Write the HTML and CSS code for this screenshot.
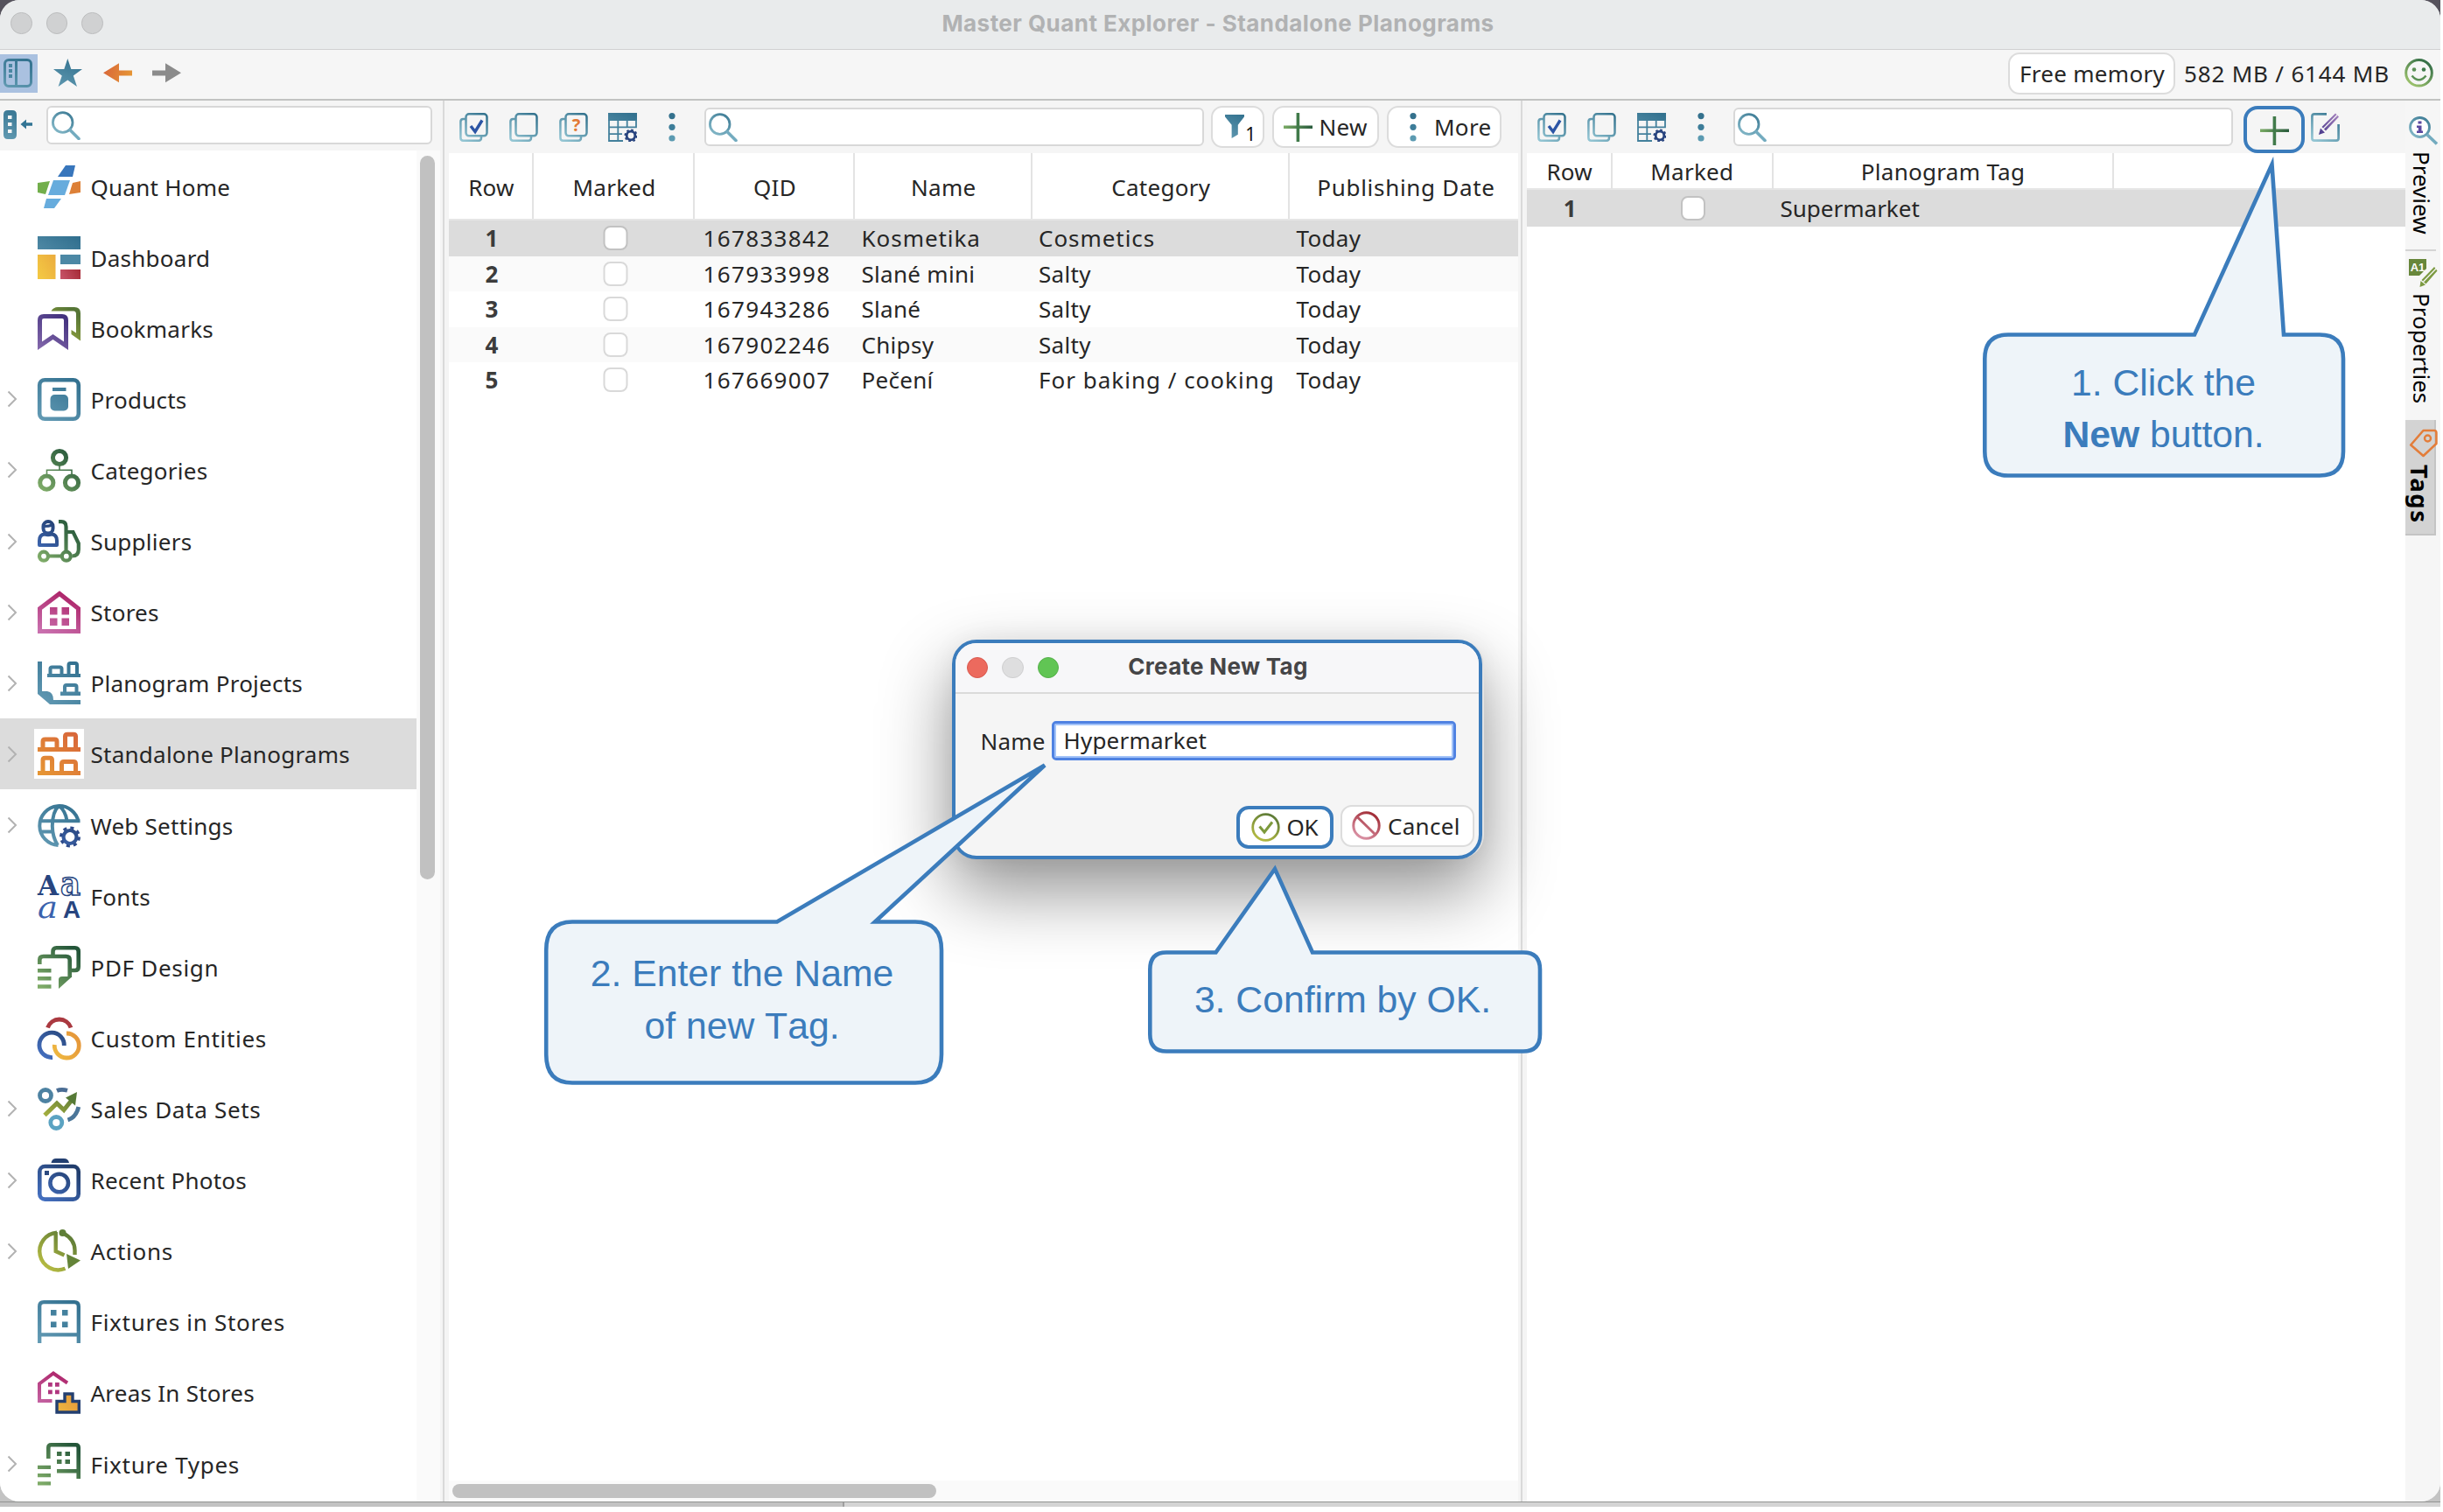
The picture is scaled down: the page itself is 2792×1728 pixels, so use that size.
FILE: index.html
```html
<!DOCTYPE html>
<html lang="en">
<head>
<meta charset="utf-8">
<title>Master Quant Explorer - Standalone Planograms</title>
<link rel="stylesheet" href="styles.css">
</head>
<body>
<svg class="defs" width="0" height="0" aria-hidden="true">
  <defs>
    <linearGradient id="teal" gradientUnits="userSpaceOnUse" x1="42" y1="0" x2="8" y2="49"><stop offset="0" stop-color="#32708f"/><stop offset="1" stop-color="#6199b3"/></linearGradient>
    <linearGradient id="green" gradientUnits="userSpaceOnUse" x1="42" y1="4" x2="3" y2="46"><stop offset="0" stop-color="#235539"/><stop offset="1" stop-color="#7fac68"/></linearGradient>
    <linearGradient id="blue" gradientUnits="userSpaceOnUse" x1="34" y1="6" x2="4" y2="49"><stop offset="0" stop-color="#213d6c"/><stop offset="1" stop-color="#4672c4"/></linearGradient>
    <linearGradient id="orange" gradientUnits="userSpaceOnUse" x1="42" y1="0" x2="4" y2="49"><stop offset="0" stop-color="#d8663a"/><stop offset="1" stop-color="#e69634"/></linearGradient>
    <linearGradient id="pink" gradientUnits="userSpaceOnUse" x1="30" y1="4" x2="10" y2="49"><stop offset="0" stop-color="#ae266b"/><stop offset="1" stop-color="#c970ae"/></linearGradient>
    <linearGradient id="olive" gradientUnits="userSpaceOnUse" x1="40" y1="4" x2="6" y2="46"><stop offset="0" stop-color="#567636"/><stop offset="1" stop-color="#bcc042"/></linearGradient>
    <linearGradient id="purple" gradientUnits="userSpaceOnUse" x1="30" y1="8" x2="2" y2="49"><stop offset="0" stop-color="#40307c"/><stop offset="1" stop-color="#8468ac"/></linearGradient>
    <linearGradient id="yellow" gradientUnits="userSpaceOnUse" x1="46" y1="22" x2="4" y2="48"><stop offset="0" stop-color="#e5963a"/><stop offset="1" stop-color="#f3c743"/></linearGradient>
    <linearGradient id="red" gradientUnits="userSpaceOnUse" x1="49" y1="38" x2="26" y2="49"><stop offset="0" stop-color="#a52a36"/><stop offset="1" stop-color="#c8556a"/></linearGradient>
    <linearGradient id="t" gradientUnits="userSpaceOnUse" x1="24" y1="0" x2="10" y2="33"><stop offset="0" stop-color="#33728f"/><stop offset="1" stop-color="#5e97af"/></linearGradient>
    <linearGradient id="tl" gradientUnits="userSpaceOnUse" x1="28" y1="2" x2="6" y2="33"><stop offset="0" stop-color="#35748f"/><stop offset="1" stop-color="#93c5d3"/></linearGradient>
    <linearGradient id="g" gradientUnits="userSpaceOnUse" x1="33" y1="10" x2="0" y2="22"><stop offset="0" stop-color="#235539"/><stop offset="1" stop-color="#7fb068"/></linearGradient>
    <linearGradient id="gl" gradientUnits="userSpaceOnUse" x1="26" y1="2" x2="6" y2="31"><stop offset="0" stop-color="#2f6a45"/><stop offset="1" stop-color="#a2c76e"/></linearGradient>
    <linearGradient id="o" gradientUnits="userSpaceOnUse" x1="0" y1="10" x2="33" y2="20"><stop offset="0" stop-color="#d8663a"/><stop offset="1" stop-color="#e69634"/></linearGradient>
    <linearGradient id="ol" gradientUnits="userSpaceOnUse" x1="24" y1="0" x2="8" y2="33"><stop offset="0" stop-color="#567636"/><stop offset="1" stop-color="#bcc042"/></linearGradient>
    <linearGradient id="r" gradientUnits="userSpaceOnUse" x1="24" y1="4" x2="8" y2="33"><stop offset="0" stop-color="#a3303a"/><stop offset="1" stop-color="#df9aae"/></linearGradient>
    <linearGradient id="p" gradientUnits="userSpaceOnUse" x1="8" y1="22" x2="32" y2="2"><stop offset="0" stop-color="#4a3a8c"/><stop offset="1" stop-color="#a884bf"/></linearGradient>

    <symbol id="i-search" viewBox="0 0 33 33"><circle cx="12.7" cy="13" r="11.3" fill="none" stroke="url(#tl)" stroke-width="2.8"/><path d="M21 21.5L31 31.5" stroke="#73abbf" stroke-width="3.6" stroke-linecap="round"/></symbol>
    <symbol id="i-copies" viewBox="0 0 33 33"><g fill="none" stroke="url(#tl)" stroke-width="2.5"><rect x="7.5" y="1.3" width="24" height="25" rx="3.5"/><path d="M7.5 7H4.5Q1.4 7 1.4 10V28.5Q1.4 31.7 4.5 31.7H22Q25 31.7 25 28.5V26.5"/></g></symbol>
    <symbol id="i-grid" viewBox="0 0 33 33"><path d="M0 0H33V9H0Z" fill="url(#t)"/><path d="M1 8V32H17M1 16.3H32V8M1 24.2H16M11.3 8V32M21.7 8V16" fill="none" stroke="#43809c" stroke-width="1.8"/><circle cx="26" cy="26" r="4.8" fill="none" stroke="#27437e" stroke-width="2.8"/><circle cx="26" cy="26" r="6.6" fill="none" stroke="#27437e" stroke-width="2" stroke-dasharray="2.6 2.58"/></symbol>
    <symbol id="i-dots" viewBox="0 0 8 33"><circle cx="4" cy="3.6" r="3.6" fill="#34718d"/><circle cx="4" cy="16.3" r="3.6" fill="#3d7d99"/><circle cx="4" cy="29" r="3.6" fill="#5b9ab1"/></symbol>
    <symbol id="i-plus" viewBox="0 0 33 33"><path d="M0 14.6H33V18H0Z" fill="url(#g)"/><path d="M14.6 0H18.2V33H14.6Z" fill="#417a4a"/></symbol>
    <symbol id="i-chev" viewBox="0 0 12 20"><path d="M1.5 1.5L10 10L1.5 18.5" fill="none" stroke="#b2b2b2" stroke-width="2"/></symbol>
  </defs>
</svg>

<div class="desktop">
<div class="window">
  <header class="titlebar">
    <div class="lights"><i></i><i></i><i></i></div>
    <h1>Master Quant Explorer - Standalone Planograms</h1>
  </header>

  <div class="toolbar">
    <button class="toggle" aria-label="Toggle sidebar"><svg viewBox="0 0 33 33"><g fill="none" stroke="url(#t)" stroke-width="3"><rect x="1.5" y="1.5" width="30" height="30" rx="4.5"/><path d="M14.5 2V31"/></g><path d="M6 6H10V10H6ZM6 12H10V16H6ZM6 18H10V22H6Z" fill="#4a87a2"/></svg></button>
    <svg class="ic star" viewBox="0 0 33 33"><path d="M16.3 0L20.3 12H33L22.8 19.6L27 32L16.3 24.4L5.6 32L9.8 19.6L0 12H12.3Z" fill="url(#t)"/></svg>
    <svg class="ic back" viewBox="0 0 33 33"><path d="M0 16.3L18 5.3V13.6H33V19.6H18V27.3Z" fill="url(#o)"/></svg>
    <svg class="ic fwd" viewBox="0 0 33 33"><path d="M33 16.3L15 5.3V13.6H0V19.6H15V27.3Z" fill="#8b8b8b"/></svg>
    <button class="btn memory">Free memory</button>
    <span class="usage">582 MB / 6144 MB</span>
    <svg class="ic smile" viewBox="0 0 33 33"><circle cx="16.5" cy="16.3" r="14.8" fill="none" stroke="url(#gl)" stroke-width="3"/><circle cx="11" cy="12.5" r="2.3" fill="#5a9055"/><circle cx="22" cy="12.5" r="2.3" fill="#3f7a4b"/><path d="M8.5 19.5Q16.5 29 24.5 19.5" fill="none" stroke="#5a9055" stroke-width="2.6"/></svg>
  </div>

  <main>
    <aside class="sidebar">
      <div class="side-tools">
        <svg class="ic collapse" viewBox="0 0 33 33"><path d="M5 0H10Q15 0 15 5V28Q15 33 10 33H5Q0 33 0 28V5Q0 0 5 0ZM5 6V10H9.500V6ZM5 14V18H9.500V14ZM5 22V26H9.500V22Z" fill="url(#t)" fill-rule="evenodd"/><path d="M19.500 16L26 10.500V14.200H33V17.800H26V21.500Z" fill="#327494"/></svg>
        <div class="search"><svg class="ic"><use href="#i-search"/></svg></div>
      </div>
      <div class="side-body">
        <nav>
          <div class="item"><span class="chev"></span><svg class="icon" viewBox="0 0 49 49"><path d="M23 13L32 0H43L40 13Z" fill="#3876bc"/><path d="M0 20L14 18L9 33L0 31Z" fill="#72ae4b"/><path d="M18 17H37L31 34H12Z" fill="#67acdd"/><path d="M40 20L49 18V31L36 33Z" fill="#dd8037"/><path d="M10 38H27L19 49H7Z" fill="#67acdd"/></svg><span>Quant Home</span></div>
          <div class="item"><span class="chev"></span><svg class="icon" viewBox="0 0 49 49"><path d="M0 0H49V15H0Z" fill="url(#teal)"/><path d="M0 21H20.500V49H0Z" fill="url(#yellow)"/><path d="M26 21H49V32H26Z" fill="#4c88a5"/><path d="M26 38H49V49H26Z" fill="url(#red)"/></svg><span>Dashboard</span></div>
          <div class="item"><span class="chev"></span><svg class="icon" viewBox="0 0 49 49"><path fill="url(#purple)" fill-rule="evenodd" d="M0 49V15Q0 8 7 8H28Q35 8 35 15V49L17.500 37ZM5 39.500V15Q5 13 7 13H28Q30 13 30 15V39.500L17.500 31Z"/><path d="M15.500 4.500Q18 0 23 0H42Q49 0 49 7V38.500L38.500 31V26L44 29.500V8Q44 4.500 41 4.500Z" fill="url(#olive)"/></svg><span>Bookmarks</span></div>
          <div class="item"><svg class="chev"><use href="#i-chev"/></svg><svg class="icon" viewBox="0 0 49 49"><rect x="2.200" y="2.200" width="44.600" height="44.600" rx="6" fill="none" stroke="url(#teal)" stroke-width="4.600"/><path d="M17 11H32.500V15H17Z" fill="url(#teal)"/><rect x="14.500" y="19" width="20.500" height="18.500" rx="5" fill="url(#teal)"/></svg><span>Products</span></div>
          <div class="item"><svg class="chev"><use href="#i-chev"/></svg><svg class="icon" viewBox="0 0 49 49"><g fill="none" stroke="url(#green)" stroke-width="5"><circle cx="25" cy="10" r="7.600"/><circle cx="10.300" cy="38.700" r="7.600"/><circle cx="39" cy="38.700" r="7.600"/><path d="M25 18V24M10.500 30V24.300H39V30" stroke-width="1.600"/></g></svg><span>Categories</span></div>
          <div class="item"><svg class="chev"><use href="#i-chev"/></svg><svg class="icon" viewBox="0 0 49 49"><g fill="none" stroke="url(#blue)" stroke-width="4"><rect x="6.500" y="2" width="11" height="13.500" rx="5.500"/><path d="M7 7.500Q13 7.500 17 6" stroke-width="3"/><path d="M2 29V24Q2 17 8 16.500Q12 18 16 16.500Q22 17 22 24V29H2Z" stroke-linejoin="round"/></g><g fill="none" stroke="url(#green)" stroke-width="4.200"><path d="M24 2.200H27Q32.500 2.200 32.500 8V36M34 14H40.500L46.800 27V34Q46.800 41.500 39.500 41.500M12 41.500H28"/><circle cx="7" cy="41.700" r="5"/><circle cx="32.800" cy="41.700" r="5"/></g></svg><span>Suppliers</span></div>
          <div class="item"><svg class="chev"><use href="#i-chev"/></svg><svg class="icon" viewBox="0 0 49 49"><path d="M2.500 20.500L25 3.500L46.500 20.500V46.500H2.500Z" fill="none" stroke="url(#pink)" stroke-width="5"/><path d="M14 19H22.500V27.500H14ZM27.500 19H36V27.500H27.500ZM14 31.500H22.500V40H14ZM27.500 31.500H36V40H27.500Z" fill="url(#pink)"/></svg><span>Stores</span></div>
          <div class="item"><svg class="chev"><use href="#i-chev"/></svg><svg class="icon" viewBox="0 0 49 49"><g fill="url(#teal)"><path d="M0 0H5V34H11Q18 35 18 44H49V49H14L0 37Z"/><path d="M11 14H49V18H11ZM26 34.500H49V39H26Z"/></g><g fill="none" stroke="url(#teal)" stroke-width="4"><path d="M14.500 15V8.500Q14.500 6.500 16.500 6.500H25.500Q27.500 6.500 27.500 8.500V15M35.500 15V4Q35.500 2 37.500 2H43Q45 2 45 4V15M31 35V29Q31 27 33 27H42.500Q44.500 27 44.500 29V35"/></g></svg><span>Planogram Projects</span></div>
          <div class="item active"><svg class="chev"><use href="#i-chev"/></svg><svg class="icon" viewBox="0 0 49 49"><path d="M0 17H49V22H0ZM0 44H49V49H0Z" fill="url(#orange)"/><g fill="none" stroke="url(#orange)" stroke-width="5"><path d="M6 18V10.500Q6 8 8.500 8H19.500Q22 8 22 10.500V18M31.500 18V4.500Q31.500 2.300 34 2.300H41Q43.500 2.300 43.500 4.500V18M6 45V31.500Q6 29.300 8.500 29.300H14Q16.500 29.300 16.500 31.500V45M27.500 45V36Q27.500 33.500 30 33.500H41Q43.500 33.500 43.500 36V45"/></g></svg><span>Standalone Planograms</span></div>
          <div class="item"><svg class="chev"><use href="#i-chev"/></svg><svg class="icon" viewBox="0 0 49 49"><g fill="none" stroke="url(#teal)" stroke-width="4"><path d="M46.800 21A22.400 22.400 0 1 0 23.500 46.900M3 19.300H48.500M3 31.500H16M24.500 2Q17 8 16.800 25Q17 38 23 47M24.500 2Q32 8 33.500 19"/></g><circle cx="37" cy="37.500" r="7.500" fill="none" stroke="url(#blue)" stroke-width="4.200"/><circle cx="37" cy="37.500" r="10.500" fill="none" stroke="#2c4a8a" stroke-width="3" stroke-dasharray="4.100 4.150"/></svg><span>Web Settings</span></div>
          <div class="item"><span class="chev"></span><svg class="icon glyphs" viewBox="0 0 49 49"><text x="0" y="22.500" class="g-slab" textLength="24" lengthAdjust="spacingAndGlyphs">A</text><text x="26" y="22.500" class="g-open" textLength="23" lengthAdjust="spacingAndGlyphs">a</text><text x="0" y="49" class="g-ital" textLength="23" lengthAdjust="spacingAndGlyphs">a</text><text x="29" y="49" class="g-bold" textLength="20" lengthAdjust="spacingAndGlyphs">A</text></svg><span>Fonts</span></div>
          <div class="item"><span class="chev"></span><svg class="icon" viewBox="0 0 49 49"><g fill="none" stroke="url(#green)" stroke-width="4.600"><path d="M17.500 10V6.500Q17.500 2.300 21.500 2.300H42.700Q46.700 2.300 46.700 6.500V24Q46.700 28 42.700 28H39M2.300 21V16Q2.300 12 6.500 12H32.500Q36.700 12 36.700 16V36"/></g><path d="M24 49V38.500Q24 35 28 35H39.500ZM0 26H15.500V30.500H0ZM0 35H15.500V39.500H0ZM0 44.300H15.500V48.800H0Z" fill="url(#green)"/></svg><span class="mid">PDF Design</span></div>
          <div class="item"><span class="chev"></span><svg class="icon" viewBox="0 0 49 49"><g fill="none" stroke-width="4.800"><path d="M11.500 12.500A14 14 0 0 1 38 12.500" stroke="#aa3940"/><path d="M17 46.500A14.200 14.200 0 1 1 30.300 33" stroke="url(#blue)"/><path d="M33 19A14 14 0 1 1 19.300 32" stroke="url(#yellow)"/></g></svg><span class="mid">Custom Entities</span></div>
          <div class="item"><svg class="chev"><use href="#i-chev"/></svg><svg class="icon" viewBox="0 0 49 49"><g fill="none" stroke-width="4.800"><circle cx="9" cy="9" r="6.500" stroke="#4d82a2"/><circle cx="21.300" cy="40" r="6.500" stroke="#5ba3c2"/><path d="M22 3.500Q27 1.300 34 3.200" stroke="#4a6d94"/><path d="M46.800 22Q44 34 34.500 37" stroke="#4b7699"/><path d="M8 31.500L22 18L30 25.500L40 13" stroke="url(#olive)" stroke-width="5"/></g><path d="M45 5L32 11.500L43 20.500Z" fill="#567a36"/></svg><span class="mid">Sales Data Sets</span></div>
          <div class="item"><svg class="chev"><use href="#i-chev"/></svg><svg class="icon" viewBox="0 0 49 49"><path d="M15.500 5Q16.500 0 21 0H30Q35 0 36 5Z" fill="#233f70"/><g fill="none" stroke="url(#blue)" stroke-width="4.600"><rect x="2.300" y="9" width="44.400" height="37.600" rx="6"/><circle cx="24.700" cy="28" r="10.300"/></g><path d="M8 14H13V19H8Z" fill="#2c4a80"/></svg><span>Recent Photos</span></div>
          <div class="item"><svg class="chev"><use href="#i-chev"/></svg><svg class="icon" viewBox="0 0 49 49"><g fill="none" stroke="url(#olive)" stroke-width="4.400"><path d="M22 3.800A21.300 21.300 0 1 0 31.500 44.800M20.700 3V25L30.500 29.500M28.500 4Q42.500 11 42.500 24V29"/></g><circle cx="28.500" cy="4" r="4" fill="#5f7f38"/><path d="M33 28L49 35.500L35 45Z" fill="#648438"/></svg><span class="mid">Actions</span></div>
          <div class="item"><span class="chev"></span><svg class="icon" viewBox="0 0 49 49"><g fill="none" stroke="url(#teal)" stroke-width="4.300"><path d="M2.200 49V7Q2.200 2.200 7 2.200H42Q46.800 2.200 46.800 7V49M2 39.300H47"/></g><path d="M15 11H21.500V17.500H15ZM28 11H34.500V17.500H28ZM15 24.500H21.500V31H15ZM28 24.500H34.500V31H28Z" fill="#44819e"/></svg><span class="mid">Fixtures in Stores</span></div>
          <div class="item"><span class="chev"></span><svg class="icon" viewBox="0 0 49 49"><path d="M34 13.500L18 2.500L2 14.500V34H16.500" fill="none" stroke="url(#pink)" stroke-width="4"/><path d="M12 13H16.800V17.800H12ZM20 13H24.800V17.800H20ZM12 21.500H16.800V26.300H12ZM20 21.500H24.800V26.300H20Z" fill="#b0367f"/><path d="M22 47V34.500H31V26H40V34.500H47.300V47Z" fill="url(#yellow)" stroke="#233f70" stroke-width="3.400"/></svg><span>Areas In Stores</span></div>
          <div class="item"><svg class="chev"><use href="#i-chev"/></svg><svg class="icon" viewBox="0 0 49 49"><g fill="none" stroke="url(#green)" stroke-width="4.600"><path d="M12.300 18V5.500Q12.300 2.300 15.500 2.300H43.500Q46.700 2.300 46.700 5.500V41M22 32.300H47"/></g><path d="M22 10H27.500V15H22ZM31.500 10H37V15H31.500ZM22 19H27.500V24H22ZM31.500 19H37V24H31.500ZM0 25.700H15V30H0ZM0 35H15V39.300H0ZM0 44.300H15V48.600H0Z" fill="url(#green)"/></svg><span class="mid">Fixture Types</span></div>
        </nav>
        <div class="vtrack"><div class="vthumb"></div></div>
      </div>
    </aside>
    <div class="divider"></div>

    <section class="panel planograms">
      <div class="panel-tools">
        <svg class="ic"><use href="#i-copies"/><path d="M13 15L18 21.500L26 8.500" fill="none" stroke="#2c55a5" stroke-width="3.400"/></svg>
        <svg class="ic"><use href="#i-copies"/></svg>
        <svg class="ic"><use href="#i-copies"/><text x="19.500" y="20.500" class="qmark" text-anchor="middle">?</text></svg>
        <svg class="ic"><use href="#i-grid"/></svg>
        <svg class="dots"><use href="#i-dots"/></svg>
        <div class="search"><svg class="ic"><use href="#i-search"/></svg></div>
        <button class="btn filter"><svg viewBox="0 0 26 32"><path d="M0 0H26V3L17.500 14V27L9 32V14L0 3Z" fill="url(#t)"/></svg><sub>1</sub></button>
        <button class="btn new"><svg class="ic"><use href="#i-plus"/></svg>New</button>
        <button class="btn more"><svg class="dots"><use href="#i-dots"/></svg>More</button>
      </div>
      <div class="grid head">
        <span>Row</span><span>Marked</span><span>QID</span><span>Name</span><span>Category</span><span class="last">Publishing Date</span>
      </div>
      <div class="grid row sel"><b>1</b><i class="check"></i><span class="num">167833842</span><span class="wide">Kosmetika</span><span class="wide">Cosmetics</span><span>Today</span></div>
      <div class="grid row alt"><b>2</b><i class="check"></i><span class="num">167933998</span><span>Slané mini</span><span>Salty</span><span>Today</span></div>
      <div class="grid row"><b>3</b><i class="check"></i><span class="num">167943286</span><span>Slané</span><span>Salty</span><span>Today</span></div>
      <div class="grid row alt"><b>4</b><i class="check"></i><span class="num">167902246</span><span>Chipsy</span><span>Salty</span><span>Today</span></div>
      <div class="grid row"><b>5</b><i class="check"></i><span class="num">167669007</span><span>Pečení</span><span class="wider">For baking / cooking</span><span>Today</span></div>
      <div class="htrack"><div class="hthumb"></div></div>
    </section>
    <div class="divider"></div>

    <section class="panel tags">
      <div class="panel-tools">
        <svg class="ic"><use href="#i-copies"/><path d="M13 15L18 21.500L26 8.500" fill="none" stroke="#2c55a5" stroke-width="3.400"/></svg>
        <svg class="ic"><use href="#i-copies"/></svg>
        <svg class="ic"><use href="#i-grid"/></svg>
        <svg class="dots"><use href="#i-dots"/></svg>
        <div class="search"><svg class="ic"><use href="#i-search"/></svg></div>
        <button class="add" aria-label="New"><svg class="ic"><use href="#i-plus"/></svg></button>
        <svg class="ic edit" viewBox="0 0 33 33"><path d="M18 1.400H4Q1.400 1.400 1.400 4V29Q1.400 31.600 4 31.600H29Q31.600 31.600 31.600 29V13" fill="none" stroke="url(#tl)" stroke-width="2.700"/><path d="M9 25L11 17.500L16 22.500ZM12.500 16L28 .5L32 4.500L17 20.500Z" fill="url(#p)"/><path d="M14 18.500L30 2.500" stroke="#f5f5f5" stroke-width="1.200"/></svg>
      </div>
      <div class="grid head"><span>Row</span><span>Marked</span><span>Planogram Tag</span><span class="last"></span></div>
      <div class="grid row sel"><b>1</b><i class="check"></i><span class="tag">Supermarket</span><span></span></div>
    </section>

    <div class="tabs">
      <div class="tab preview"><svg class="ic" viewBox="0 0 33 33"><circle cx="12.500" cy="12.500" r="11" fill="#fff" stroke="url(#tl)" stroke-width="2.800"/><path d="M21 21L32 31.500" stroke="#73abbf" stroke-width="3.600"/><path d="M10.500 5.500H14.500V8.500H10.500ZM9 10.500H14.500V16.500H16V19H9V16.500H10.800V13H9Z" fill="#5a48a0"/></svg><span>Preview</span></div>
      <div class="tab props"><svg class="ic" viewBox="0 0 33 33"><path d="M0 0H20V11L12 19H0Z" fill="#68873b"/><text x="10" y="13.500" class="a1" text-anchor="middle">A1</text><path d="M12.500 32L13.500 25L19 29.500ZM14.500 24L29 9L32.500 13.500L19.500 28.500Z" fill="#7c9a42"/><path d="M16.500 26L31 11" stroke="#f5f5f5" stroke-width="1.300"/></svg><span>Properties</span></div>
      <div class="tab on"><svg class="ic" viewBox="0 0 33 33"><path d="M16.500 2H29Q31.400 2 31.400 4.500V17L16.500 31L2.200 18.500Z" fill="none" stroke="#e37d3a" stroke-width="2.600" stroke-linejoin="round"/><circle cx="21.500" cy="11" r="3.500" fill="none" stroke="#e37d3a" stroke-width="2.400"/></svg><span>Tags</span></div>
    </div>
  </main>
</div>
<div class="behind"></div>
</div>

<div class="dialog">
  <div class="dlg-title"><div class="lights"><i class="close"></i><i></i><i class="zoom"></i></div><h2>Create New Tag</h2></div>
  <div class="dlg-field"><label for="tag-name">Name</label><div class="input" id="tag-name">Hypermarket</div></div>
  <div class="dlg-actions">
    <button class="btn ok"><svg class="ic" viewBox="0 0 33 33"><circle cx="16.500" cy="16.500" r="14.800" fill="none" stroke="url(#ol)" stroke-width="2.800"/><path d="M9.500 15.500L15 22L24 10.500" fill="none" stroke="#7d9a3c" stroke-width="3"/></svg>OK</button>
    <button class="btn cancel"><svg class="ic" viewBox="0 0 33 33"><g fill="none" stroke="url(#r)" stroke-width="3"><circle cx="16.500" cy="16.500" r="14.700"/><path d="M6 6.500L27 27"/></g></svg>Cancel</button>
  </div>
</div>

<svg class="callouts" viewBox="0 0 2792 1728" aria-hidden="true">
  <g fill="#eef4f9" stroke="#3b7cbc" stroke-width="4.600">
    <path d="M2295 382.500H2508L2596.500 188L2610 382.500H2651Q2678 382.500 2678 410V516Q2678 543.500 2651 543.500H2295Q2268.300 543.500 2268.300 516V410Q2268.300 382.500 2295 382.500Z" stroke-miterlimit="10"/>
    <path d="M654 1053.500H888L1194 874.500L1000 1053.500H1046Q1076 1053.500 1076 1086V1205Q1076 1237.500 1046 1237.500H654Q624.200 1237.500 624.200 1205V1086Q624.200 1053.500 654 1053.500Z"/>
    <path d="M1333 1088.500H1389.500L1457 993L1500 1088.500H1741Q1760 1088.500 1760 1108V1182Q1760 1201.500 1741 1201.500H1333Q1314.300 1201.500 1314.300 1182V1108Q1314.300 1088.500 1333 1088.500Z"/>
  </g>
</svg>
<p class="note n1">1. Click the<br><b>New</b> button.</p>
<p class="note n2">2. Enter the Name<br>of new Tag.</p>
<p class="note n3">3. Confirm by OK.</p>
</body>
</html>
```
FILE: styles.css
```css
* { box-sizing: border-box; }
body {
  margin: 0;
  width: 2792px;
  height: 1728px;
  overflow: hidden;
  position: relative;
  background: #fff;
  color: #262626;
  font: 26px/40px "Noto Sans", sans-serif;
  letter-spacing: .3px;
}
h1, h2, p { margin: 0; }
button { font: inherit; letter-spacing: inherit; color: inherit; padding: 0; border: 0; background: none; }
.defs { display: block; position: absolute; }
.ic { display: block; width: 33px; height: 33px; flex: none; overflow: visible; }

.desktop { width: 2789px; height: 1722px; background: linear-gradient(#55525c 0 40px, #c3c3c3 40px); }
.window {
  height: 1716px;
  display: flex;
  flex-direction: column;
  border-radius: 22px;
  overflow: hidden;
  background: #f5f5f5;
}
.behind { height: 6px; border-top: 1px solid #929492; background: linear-gradient(90deg, #c3c3c3 963px, #9e9e9e 963px 965px, #d4d4d4 965px); }

/* title bar */
.titlebar { height: 57px; flex: none; background: #e9ebec; border-bottom: 1px solid #d0d1d2; display: grid; grid-template-columns: 200px 1fr 200px; align-items: center; padding-bottom: 3px; }
.lights { display: flex; gap: 16px; padding-left: 12px; }
.lights i { width: 24.5px; height: 24.5px; border-radius: 50%; background: #d0d1d2; border: 1.5px solid #bcbdbe; }
h1 { font: 700 26px/40px Inter, sans-serif; letter-spacing: .45px; color: #b1b2b3; text-align: center; padding-right: 5px; }

/* main toolbar */
.toolbar { height: 57.500px; flex: none; display: flex; align-items: center; border-bottom: 2px solid #c2c3c2; background: #f6f6f6; padding-bottom: 2px; }
.toggle { width: 42.500px; height: 44px; background: #aac1e0; padding-left: 4px; margin-right: 18.500px; }
.toggle svg { display: block; width: 33px; height: 33px; }
.back { margin-left: 23.500px; }
.fwd { margin-left: 23.500px; }
.btn { display: flex; align-items: center; height: 48px; background: #fff; border: 2px solid #dcdcdc; border-radius: 13px; }
.memory { width: 191px; justify-content: center; margin-left: auto; padding-left: 1px; }
.usage { letter-spacing: .82px; width: 236px; margin: 0 16px 0 10px; white-space: nowrap; }
.smile { margin-right: 8px; }

main { flex: 1; min-height: 0; display: grid; grid-template-columns: 503px 10px 1222px 10px 1003.500px 1fr; }
.divider { background: linear-gradient(90deg, #f4f4f4 3px, #d9d9d9 3px 5px, #f4f4f4 5px); }

/* sidebar */
.sidebar { display: flex; flex-direction: column; min-height: 0; }
.side-tools { height: 57px; flex: none; display: flex; padding: 6.500px 9px 0 4px; }
.collapse { margin-top: 5px; }
.search { height: 44px; flex: 1; background: #fff; border: 2px solid #d8d8d8; border-radius: 6px; padding: 3.500px; }
.side-tools .search { margin-left: 16px; }
.side-body { flex: 1; min-height: 0; display: grid; grid-template-columns: 476px 27px; background: #fff; }
nav { padding-top: 1px; overflow: hidden; }
.item { height: 81.110px; display: flex; align-items: center; padding-left: 8px; white-space: nowrap; letter-spacing: .25px; }
.item > span:last-child { padding-top: 1px; }
.item .mid { letter-spacing: .7px; }
.grid .wide { letter-spacing: .95px; }
.grid .wider { letter-spacing: 1px; }
.item.active { background: #dcdcdc; }
.chev { width: 12px; height: 20px; flex: none; margin-right: 18.500px; }
.icon { width: 57px; height: 57px; padding: 4px; flex: none; margin-right: 8px; background: #fff; overflow: visible; }
.glyphs { fill: #27457f; letter-spacing: 0; }
.g-slab { font: 700 31px "DejaVu Serif", serif; }
.g-open { font: 700 40px "DejaVu Serif", serif; fill: #fff; stroke: #27457f; stroke-width: 1.600px; }
.g-ital { font: italic 400 36px "DejaVu Serif", serif; fill: #3a62ad; }
.g-bold { font: 700 28px "Liberation Sans", sans-serif; }
.vtrack { background: #fafafa; padding: 6px 0 0 4px; }
.vthumb { width: 17px; height: 827px; border-radius: 9px; background: #c1c1c1; }

/* panels */
.panel { display: flex; flex-direction: column; background: #fff; min-width: 0; }
.panel-tools { height: 60.500px; flex: none; display: flex; align-items: flex-start; background: #f5f5f5; }
.panel-tools > .ic { margin-top: 14px; }
.dots { display: block; width: 8px; height: 33px; flex: none; }
.panel-tools > .dots { margin-top: 14px; }
.panel-tools .search { margin-top: 8.500px; }
.panel-tools .btn { margin-top: 6.500px; }
.planograms .panel-tools { padding-left: 12px; gap: 23.800px; }
.planograms .search { flex: none; width: 571px; margin-left: 9px; margin-right: -15.500px; }
.planograms .dots { margin-left: 12px; }
.qmark { font: 700 20px "Noto Sans", sans-serif; fill: #e27a36; letter-spacing: 0; }
.filter { width: 60.500px; margin-right: -14.600px; padding-left: 12px; }
.filter svg { width: 26px; height: 27px; display: block; flex: none; margin-bottom: 2px; }
.filter sub { font-size: 21px; line-height: 24px; vertical-align: 0; align-self: flex-end; color: #111; margin-left: -1px; margin-bottom: 2px; }
.btn.new { width: 122.500px; padding-left: 11px; gap: 7.500px; margin-right: -14.800px; }
.btn.more { width: 131px; }
.btn.more .dots { margin: 0 19.500px 0 24px; }

.grid { display: grid; flex: none; align-items: center; white-space: nowrap; }
.planograms .grid { grid-template-columns: 97px 184px 183px 202.500px 294.500px 261px; }
.head { background: #fff; border-bottom: 2px solid #e6e6e6; }
.head span { height: 100%; display: flex; align-items: center; justify-content: center; border-right: 2px solid #e3e3e3; }
.head .last { border-right: 0; }
.planograms .head { height: 77px; padding: 0; }
.planograms .head span { padding: 2px 0 0 2px; }
.planograms .head .last { letter-spacing: .7px; padding-left: 5px; }
.row { height: 40.500px; }
.row span { padding-left: 7.500px; }
.row b { text-align: center; color: #3c3c3c; padding-left: 1px; }
.row .num { padding-left: 9.500px; letter-spacing: 1.350px; }
.row.sel { background: #dcdcdc; }
.row.alt { background: #fafafa; }
.check { display: block; width: 28px; height: 28px; margin: 0 auto; border: 2px solid #d9d9d9; border-radius: 8px; background: #fff; transform: translateX(1.500px); }
.sel .check { border-color: #c2c2c2; }
.htrack { margin-top: auto; height: 24.500px; background: #fafafa; padding: 4.500px 0 0 4px; }
.hthumb { width: 553px; height: 16px; border-radius: 8px; background: #c1c1c1; }

.tags .panel-tools { padding-left: 12px; gap: 24px; }
.tags .dots { margin: 14px 0 0 12px; }
.tags .search { flex: none; width: 571px; margin-left: 8.500px; }
.add { width: 70.500px; height: 54px; border: 4.500px solid #3b7cbc; border-radius: 16px; margin: 6.500px 0 0 -12px; padding: 3px 0 0 15px; }
.tags .edit { margin-left: -17.500px; }
.tags .grid { grid-template-columns: 97.500px 184.500px 389px 1fr; }
.tags .head { height: 42px; }
.tags .head span { padding-top: 1px; }
.tags .head span:first-child { padding-left: 2px; }
.tags .row { height: 42px; padding-bottom: 1px; }
.tags .row .tag { letter-spacing: 0; }
.tags .check { transform: none; }

/* side tabs */
.tabs { background: #f6f6f6; display: flex; flex-direction: column; }
.tab { display: flex; flex-direction: column; width: 35.500px; padding-left: 4px; color: #000; letter-spacing: 0; }
.tab span { writing-mode: vertical-rl; line-height: 33px; margin-left: -3px; }
.preview { height: 170px; padding-top: 18px; gap: 7px; }
.props { height: 195px; padding-top: 9px; gap: 6.500px; border-top: 2px solid #d4d4d4; }
.a1 { font: 700 13px "Liberation Sans", sans-serif; fill: #fff; }
.on { height: 132px; background: #d3d3d3; padding-top: 10px; gap: 8px; border-bottom: 2px solid #c4c4c4; border-right: 2px solid #c4c4c4; font-weight: 700; font-size: 27.500px; letter-spacing: 1.600px; }

/* dialog */
.dialog { position: absolute; left: 1088px; top: 731px; width: 606px; height: 251px; border: 4.500px solid #3b7cbc; border-radius: 28px; background: #f5f5f5; box-shadow: 3px 0 0 -1px #e2e2e2, 0 36px 80px 2px rgba(0, 0, 0, .42), 0 0 30px rgba(0, 0, 0, .05); display: flex; flex-direction: column; }
.dlg-title { height: 57.500px; flex: none; display: grid; grid-template-columns: 160px 1fr 160px; align-items: center; background: #f7f7f9; border-bottom: 2px solid #dadada; border-radius: 24px 24px 0 0; }
.dlg-title .lights { padding-left: 12.500px; }
.dlg-title .lights i { background: #dededf; border-color: #cfcfd0; }
.dlg-title .lights .close { background: #ec6a5e; border-color: #d9594f; }
.dlg-title .lights .zoom { background: #61c554; border-color: #55b04a; }
h2 { font: 700 26px/40px Inter, sans-serif; letter-spacing: .3px; color: #454547; text-align: center; padding-left: 2px; margin-top: -1px; }
.dlg-field { display: flex; align-items: center; margin-top: 31px; padding-left: 28.500px; letter-spacing: .2px; }
.dlg-field label { width: 81px; padding-top: 1px; }
.input { width: 462px; height: 45px; border: 3px solid #4f82e2; border-radius: 5px; background: #fff; box-shadow: inset 0 0 0 2px #a3c3f8; padding: 0 0 0 11px; line-height: 39px; }
.dlg-actions { display: flex; justify-content: flex-end; gap: 8px; margin: 51px 5px 0 0; }
.ok { width: 111px; height: 49.500px; border: 4.500px solid #3b7cbc; border-radius: 14px; padding-left: 13px; gap: 8px; margin-top: 1px; letter-spacing: -.2px; }
.cancel { width: 153.500px; padding-left: 11.500px; gap: 8px; }

/* annotations */
.callouts { position: absolute; left: 0; top: 0; width: 2792px; height: 1728px; }
.note { position: absolute; color: #3b7cbc; font: 42.700px/59px "Liberation Sans", sans-serif; letter-spacing: 0; text-align: center; white-space: nowrap; }
.n1 { left: 2268px; width: 409px; top: 408px; }
.n2 { left: 624px; width: 448px; top: 1082px; line-height: 60px; font-kerning: none; }
.n3 { left: 1314px; width: 441px; top: 1113px; }
```
